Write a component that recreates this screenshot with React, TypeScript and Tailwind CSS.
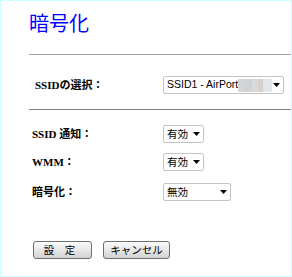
import React from 'react';

const jp = '"MS PGothic", "Noto Sans CJK JP", sans-serif';
const labelFont = '"Liberation Serif", "Noto Sans CJK JP", serif';

const Arrow = () => (
  <svg width="7" height="4" viewBox="0 0 7 4" className="shrink-0">
    <path d="M0 0h7L3.5 4z" fill="#000" />
  </svg>
);

const FakeSelect = ({ width, children }: { width: string; children: React.ReactNode }) => (
  <div
    className={`${width} flex h-[18px] items-center justify-between rounded-[2px] border border-[#c4c4c4] bg-white pl-[3px] pr-[3px] text-[10.5px] text-black`}
  >
    <div className="flex items-center overflow-hidden whitespace-nowrap">{children}</div>
    <Arrow />
  </div>
);

const Label = ({ text, indent }: { text: string; indent?: boolean }) => (
  <div
    className={`${indent ? 'pl-[34px]' : 'pl-[31px]'} w-[162px] text-[11px] font-bold text-black`}
    style={{ fontFamily: labelFont }}
  >
    {text}
  </div>
);

const Button = ({ text, width, extra }: { text: string; width: string; extra?: string }) => (
  <button
    className={`${width} ${extra ?? ''} h-[18px] rounded-[3px] border border-[#6f6f6f] bg-gradient-to-b from-[#fbfbfb] to-[#d2d2d2] text-[10.5px] leading-none text-black`}
    style={{ fontFamily: jp }}
  >
    {text}
  </button>
);

export default function App() {
  return (
    <div className="h-[277px] w-[292px] border border-[#ccffff] bg-white" style={{ fontFamily: jp }}>
      <div className="pl-[28px] pt-[11px] text-[20px] leading-[22px] text-[#0000ff]">暗号化</div>
      <div className="ml-[28px] mt-[20px] h-px bg-[#a0a0a0]" />

      <div className="mt-[21px] flex items-center">
        <Label text="SSIDの選択：" indent />
        <FakeSelect width="w-[121px]">
          <span style={{ fontFamily: '"Liberation Sans", Arial, sans-serif' }}>SSID1 - AirPort</span>
          <span className="flex h-[13px]">
            <span className="w-[6px] bg-[#d6d6d6]" />
            <span className="w-[8px] bg-[#cfd3d6]" />
            <span className="w-[6px] bg-[#d9d9d9]" />
            <span className="w-[5px] bg-[#d8d0cc]" />
            <span className="w-[9px] bg-[#e3e6ea]" />
          </span>
        </FakeSelect>
      </div>

      <div className="ml-[28px] mt-[15px] h-px bg-[#808080]" />

      <div className="mt-[15px] flex flex-col gap-[10px]">
        <div className="flex items-center">
          <Label text="SSID 通知：" />
          <FakeSelect width="w-[41px]">有効</FakeSelect>
        </div>
        <div className="flex items-center">
          <Label text="WMM：" />
          <FakeSelect width="w-[41px]">有効</FakeSelect>
        </div>
        <div className="mt-[2px] flex items-center">
          <Label text="暗号化：" />
          <FakeSelect width="w-[68px]">無効</FakeSelect>
        </div>
      </div>

      <div className="mt-[40px] flex gap-[11px] pl-[32px]">
        <Button text="設　定" width="w-[59px]" extra="pr-[6px]" />
        <Button text="キャンセル" width="w-[67px]" />
      </div>
    </div>
  );
}
